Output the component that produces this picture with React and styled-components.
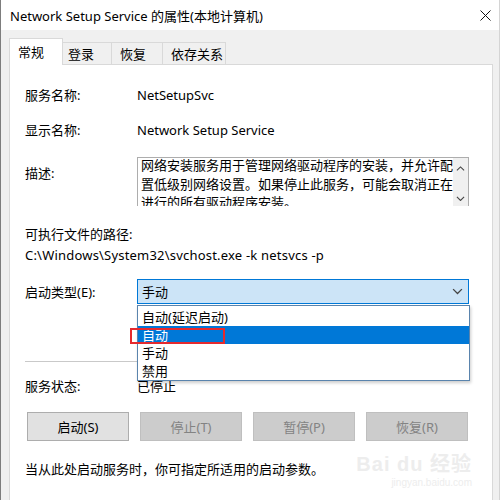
import React from 'react'
import styled, { createGlobalStyle } from 'styled-components'

const GlobalStyle = createGlobalStyle`
  body {
    margin: 0;
    background: #f0f0f0;
    font-family: "Noto Sans", "Noto Sans CJK SC", sans-serif;
    color: #000;
  }
`

// 窗口
const Window = styled.div`
  width: 500px;
  height: 500px;
  box-sizing: border-box;
  overflow: hidden;
  display: flex;
  flex-direction: column;
  border-left: 1px solid #7d7d7d;
  border-right: 1px solid #d4d4d4;
  background: #f0f0f0;
`

// 标题栏
const TitleBar = styled.div`
  height: 30px;
  flex-shrink: 0;
  background: #fff;
  display: flex;
  align-items: center;
  justify-content: space-between;
  padding: 0 8px 0 9px;
  font-size: 13px;
`

const Body = styled.div`
  flex: 1;
  display: flex;
  flex-direction: column;
  padding: 8px 6px 0 8px;
`

// 选项卡
const TabStrip = styled.div`
  display: flex;
  align-items: flex-end;
  height: 26px;
`

const Tab = styled.div`
  box-sizing: border-box;
  width: ${p => p.$w}px;
  height: ${p => (p.$active ? 27 : 22)}px;
  margin-bottom: ${p => (p.$active ? -1 : 0)}px;
  padding-left: ${p => p.$pl || 8}px;
  display: flex;
  align-items: center;
  font-size: 13px;
  background: ${p => (p.$active ? '#fff' : '#f0f0f0')};
  border: 1px solid #d9d9d9;
  border-bottom: none;
  border-left: ${p => (p.$first ? '1px solid #d9d9d9' : 'none')};
  position: relative;
  z-index: ${p => (p.$active ? 1 : 0)};
  padding-bottom: ${p => (p.$active ? 2 : 0)}px;
`

const Panel = styled.div`
  flex: 1;
  position: relative;
  background: #fff;
  border: 1px solid #d9d9d9;
  border-bottom: none;
  padding: 20px 15px 0;
  font-size: 13px;
`

const Field = styled.div`
  display: grid;
  grid-template-columns: 112px 1fr;
  align-items: ${p => p.$align || 'center'};
  margin-top: ${p => p.$gap || 0}px;
  line-height: 20px;
`

const Line = styled.div`
  margin-top: ${p => p.$gap || 0}px;
  line-height: 20px;
  white-space: nowrap;
  letter-spacing: ${p => p.$ls || 0}px;
`

const Label = styled.span`
  padding-top: ${p => p.$pt || 0}px;
`

// 描述文本框
const TextBox = styled.div`
  width: 332px;
  height: 49px;
  box-sizing: border-box;
  border: 1px solid #adadad;
  border-bottom: none;
  display: flex;
  overflow: hidden;
`

const TextBody = styled.div`
  flex: 1;
  padding: 0 0 0 3px;
  margin-top: -2px;
  line-height: 18.5px;
  font-size: 13px;
  > div { white-space: nowrap; }
`

const ScrollBar = styled.div`
  width: 17px;
  background: #f0f0f0;
  display: flex;
  flex-direction: column;
  justify-content: space-between;
  align-items: center;
  padding: 8px 0 5px;
`

// 启动类型下拉框
const Combo = styled.div`
  position: relative;
  width: 332px;
  height: 25px;
  box-sizing: border-box;
  border: 1px solid #0078d7;
  background: #cce4f7;
  display: flex;
  align-items: center;
  justify-content: space-between;
  padding: 0 5px 0 4px;
`

const DropList = styled.ul`
  position: absolute;
  top: calc(100% + 2px);
  left: -1px;
  width: 333px;
  box-sizing: border-box;
  margin: 0;
  padding: 2px 0 0;
  list-style: none;
  background: #fff;
  border: 1px solid #5a84ad;
  box-shadow: 1px 2px 3px rgba(0, 0, 0, 0.2);
  z-index: 2;
`

const DropItem = styled.li`
  height: 18px;
  line-height: 18px;
  padding-left: 4px;
  background: ${p => (p.$sel ? '#0078d7' : 'transparent')};
  color: ${p => (p.$sel ? '#fff' : '#000')};
`

const RedMark = styled.div`
  position: absolute;
  left: -8px;
  top: 48px;
  width: 95px;
  height: 16px;
  box-sizing: border-box;
  border: 2px solid #e52a2e;
  z-index: 3;
`

const Separator = styled.div`
  margin-top: ${p => p.$gap}px;
  width: 440px;
  height: 1px;
  background: #c9c9c9;
`

// 按钮
const ButtonRow = styled.div`
  display: flex;
  gap: 11px;
  margin-top: 16px;
  padding-left: 2px;
`

const Button = styled.div`
  width: 102px;
  height: 29px;
  box-sizing: border-box;
  display: flex;
  align-items: center;
  justify-content: center;
  font-size: 13px;
  background: ${p => (p.$disabled ? '#cccccc' : '#e1e1e1')};
  border: 1px solid ${p => (p.$disabled ? '#bfbfbf' : '#adadad')};
  color: ${p => (p.$disabled ? '#838383' : '#000')};
`

// 百度经验水印
const Watermark = styled.div`
  position: absolute;
  right: 20px;
  bottom: 12px;
  color: #ededed;
  text-align: right;
  font-family: "Liberation Sans", "Noto Sans CJK SC", sans-serif;
  line-height: 1;
`

const WaterBig = styled.div`
  font-size: 20px;
  font-weight: bold;
  letter-spacing: 1px;
`

const WaterSmall = styled.div`
  font-size: 10px;
  margin-top: 4px;
`

const Chevron = ({ up, size = 10 }) => (
  <svg width={size} height={size * 0.6} viewBox="0 0 10 6">
    <polyline
      points={up ? '1,5 5,1 9,5' : '1,1 5,5 9,1'}
      fill="none"
      stroke="#444"
      strokeWidth="1.2"
    />
  </svg>
)

function App() {
  return (
    <Window>
      <GlobalStyle />
      <TitleBar>
        <span>Network Setup Service 的属性(本地计算机)</span>
        <svg width="11" height="11" viewBox="0 0 11 11">
          <path d="M0.5 0.5 L10.5 10.5 M10.5 0.5 L0.5 10.5" stroke="#111" strokeWidth="1" />
        </svg>
      </TitleBar>
      <Body>
        <TabStrip>
          <Tab $active $first $w={54}>常规</Tab>
          <Tab $w={49} $pl={5}>登录</Tab>
          <Tab $w={51}>恢复</Tab>
          <Tab $w={63}>依存关系</Tab>
        </TabStrip>
        <Panel>
          <Field>
            <span>服务名称:</span>
            <span>NetSetupSvc</span>
          </Field>
          <Field $gap={15}>
            <span>显示名称:</span>
            <span>Network Setup Service</span>
          </Field>
          <Field $gap={17} $align="start">
            <Label $pt={6}>描述:</Label>
            <TextBox>
              <TextBody>
                <div>网络安装服务用于管理网络驱动程序的安装，并允许配</div>
                <div>置低级别网络设置。如果停止此服务，可能会取消正在</div>
                <div>进行的所有驱动程序安装。</div>
              </TextBody>
              <ScrollBar>
                <Chevron up size={9} />
                <Chevron size={9} />
              </ScrollBar>
            </TextBox>
          </Field>
          <Line $gap={18}>可执行文件的路径:</Line>
          <Line $gap={1} $ls={0.2}>C:\Windows\System32\svchost.exe -k netsvcs -p</Line>
          <Field $gap={14}>
            <span>启动类型(E):</span>
            <Combo>
              <span>手动</span>
              <Chevron size={11} />
              <DropList>
                <DropItem>自动(延迟启动)</DropItem>
                <DropItem $sel>自动</DropItem>
                <DropItem>手动</DropItem>
                <DropItem>禁用</DropItem>
              </DropList>
              <RedMark />
            </Combo>
          </Field>
          <Separator $gap={57} />
          <Field $gap={14}>
            <span>服务状态:</span>
            <span>已停止</span>
          </Field>
          <ButtonRow>
            <Button>启动(S)</Button>
            <Button $disabled>停止(T)</Button>
            <Button $disabled>暂停(P)</Button>
            <Button $disabled>恢复(R)</Button>
          </ButtonRow>
          <Line $gap={18}>当从此处启动服务时，你可指定所适用的启动参数。</Line>
          <Watermark>
            <WaterBig>Bai du 经验</WaterBig>
            <WaterSmall>jingyan.baidu.com</WaterSmall>
          </Watermark>
        </Panel>
      </Body>
    </Window>
  )
}

export default App
